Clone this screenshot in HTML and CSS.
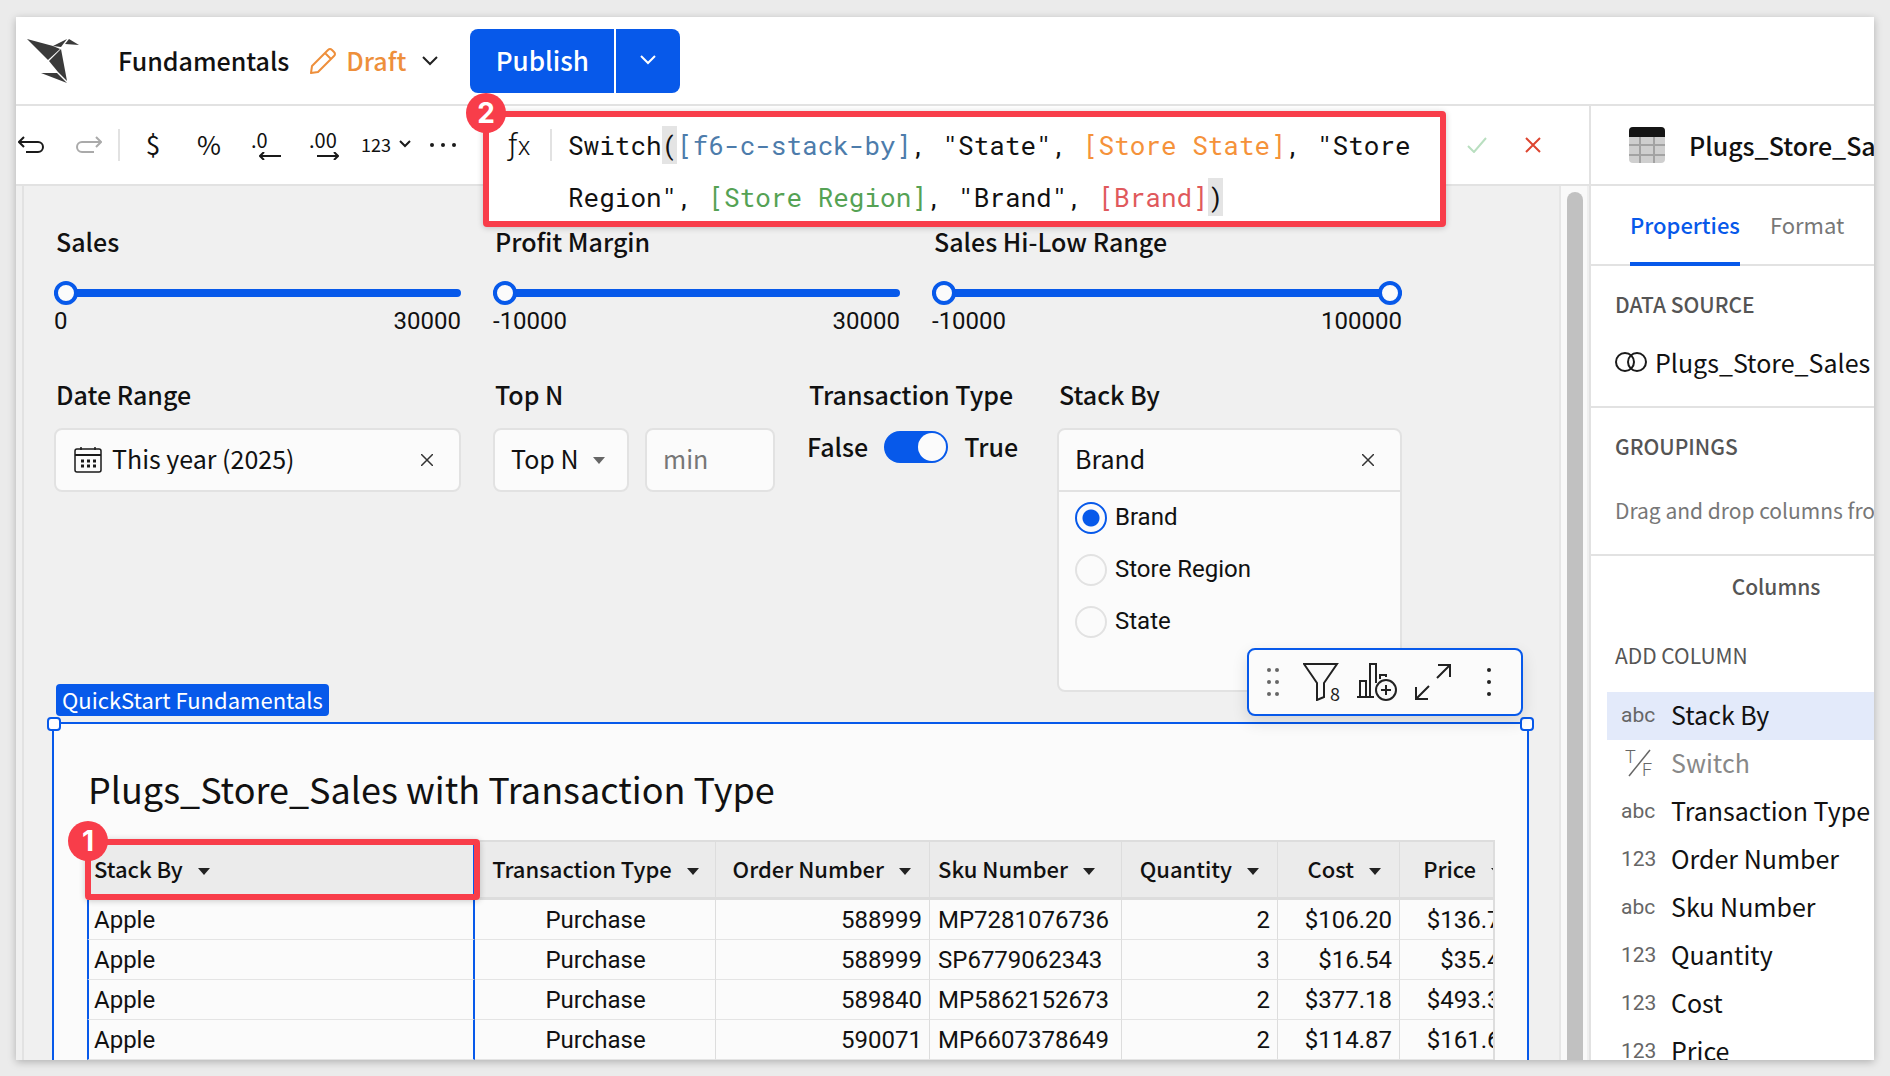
FILE: index.html
```html
<!DOCTYPE html>
<html lang="en">
<head>
<meta charset="utf-8">
<title>Fundamentals</title>
<link rel="stylesheet" href="styles.css">
</head>
<body>
<div class="window">
  <header class="topbar">
    <svg class="logo" width="52" height="46" viewBox="0 0 52 46" fill="#3a3a3a">
      <path d="M0 1 26 8 33 11 21 22Z"/><path d="M34 11 22 23 31 34 40 43Z"/><path d="M14 35H30L40 45Z"/><path d="M26 8 40 1 34 9Z"/><path d="M42 1 52 7 38 6Z"/>
    </svg>
    <h1 class="doc-name">Fundamentals</h1>
    <button class="draft" type="button">
      <svg width="28" height="28" viewBox="0 0 28 28" fill="none" stroke="#ee8f3b" stroke-width="2" stroke-linejoin="round"><path d="M2 26 3 19 19 3Q21 1 23 3L25 5Q27 7 25 9L9 25ZM16 6 22 12"/></svg>
      <span>Draft</span>
      <svg class="draft-chevron" width="16" height="10" viewBox="0 0 16 10" fill="none" stroke="#222" stroke-width="2"><path d="M1 1 8 8 15 1"/></svg>
    </button>
    <div class="publish">
      <button class="publish-main" type="button">Publish</button>
      <button class="publish-more" type="button" aria-label="Publish options">
        <svg width="18" height="10" viewBox="0 0 18 10" fill="none" stroke="#fff" stroke-width="2"><path d="M2 1 9 8 16 1"/></svg>
      </button>
    </div>
  </header>

  <div class="body">
    <div class="work">
      <div class="toolbar">
        <div class="tools">
          <button class="tool tool-undo" type="button" aria-label="Undo"><svg width="28" height="18" viewBox="0 0 28 18" fill="none" stroke="#1a1a1a" stroke-width="2"><path d="M6 1 1 6 6 11M1 6H20A5 5 0 0 1 20 16H8"/></svg></button>
          <button class="tool tool-redo" type="button" aria-label="Redo"><svg width="28" height="18" viewBox="0 0 28 18" fill="none" stroke="#aaa" stroke-width="2"><path d="M22 1 27 6 22 11M27 6H8A5 5 0 0 0 8 16H20"/></svg></button>
          <span class="divider"></span>
          <button class="tool tool-sign tool-first" type="button">$</button>
          <button class="tool tool-sign" type="button">%</button>
          <button class="tool tool-dec" type="button"><span>.0</span><svg width="22" height="8" viewBox="0 0 22 8" fill="none" stroke="#1a1a1a" stroke-width="2"><path d="M5 0 1 4 5 8M1 4H22"/></svg></button>
          <button class="tool tool-dec" type="button"><span>.00</span><svg width="22" height="8" viewBox="0 0 22 8" fill="none" stroke="#1a1a1a" stroke-width="2"><path d="M17 0 21 4 17 8M21 4H0"/></svg></button>
          <button class="tool tool-num" type="button">123<svg width="12" height="8" viewBox="0 0 12 8" fill="none" stroke="#1a1a1a" stroke-width="2"><path d="M1 1 6 6 11 1"/></svg></button>
          <button class="tool tool-more" type="button" aria-label="More"><svg width="26" height="4" viewBox="0 0 26 4" fill="#1a1a1a"><circle cx="2" cy="2" r="2"/><circle cx="13" cy="2" r="2"/><circle cx="24" cy="2" r="2"/></svg></button>
        </div>
        <div class="formula">
          <span class="badge">2</span>
          <span class="fx">ƒ<small>x</small></span>
          <span class="divider"></span>
          <div class="code" role="textbox" aria-label="Formula" contenteditable="true" spellcheck="false">Switch<mark>(</mark><span class="t-blue">[f6-c-stack-by]</span>, "State", <span class="t-orange">[Store State]</span>, "Store Region", <span class="t-green">[Store Region]</span>, "Brand", <span class="t-red">[Brand]</span><mark>)</mark></div>
        </div>
        <div class="confirm">
          <button type="button" aria-label="Apply"><svg width="20" height="16" viewBox="0 0 20 16" fill="none" stroke="#b9dfc0" stroke-width="2"><path d="M1 9 7 15 19 1"/></svg></button>
          <button type="button" aria-label="Cancel"><svg width="16" height="16" viewBox="0 0 16 16" fill="none" stroke="#dd4530" stroke-width="2"><path d="M1 1 15 15M15 1 1 15"/></svg></button>
        </div>
      </div>

      <div class="stage">
        <main class="canvas">
          <div class="controls sliders">
            <div class="control">
              <label for="sales">Sales</label>
              <input class="range" id="sales" type="range" min="0" max="30000" value="0">
              <div class="bounds"><span>0</span><span>30000</span></div>
            </div>
            <div class="control">
              <label for="margin">Profit Margin</label>
              <input class="range" id="margin" type="range" min="-10000" max="30000" value="-10000">
              <div class="bounds"><span>-10000</span><span>30000</span></div>
            </div>
            <div class="control">
              <label for="low">Sales Hi-Low Range</label>
              <div class="dual">
                <input class="range" id="low" type="range" min="-10000" max="100000" value="-10000">
                <input class="range range-over" type="range" min="-10000" max="100000" value="100000" aria-label="Sales high">
              </div>
              <div class="bounds"><span>-10000</span><span>100000</span></div>
            </div>
          </div>

          <div class="controls filters">
            <div class="control">
              <label for="date">Date Range</label>
              <div class="box box-row">
                <svg class="calendar" width="28" height="26" viewBox="0 0 28 26" fill="none" stroke="#1a1a1a" stroke-width="1.5"><rect x="1" y="2" width="26" height="23" rx="2"/><path d="M7 0V3M21 0V3"/><path d="M1 8H27" stroke-width="2"/><path d="M7 14H22M7 19H22" stroke-width="3" stroke-dasharray="3 3"/></svg>
                <input id="date" value="This year (2025)" readonly>
                <button class="clear" type="button" aria-label="Clear"><svg width="12" height="12" viewBox="0 0 12 12" fill="none" stroke="#333" stroke-width="1.5"><path d="M0 0 12 12M12 0 0 12"/></svg></button>
              </div>
            </div>
            <div class="control">
              <label for="topn">Top N</label>
              <div class="pair">
                <div class="box pick">
                  <select id="topn"><option>Top N</option></select>
                  <svg class="pick-caret" width="12" height="7" viewBox="0 0 12 7" fill="#666"><path d="M0 0H12L6 7Z"/></svg>
                </div>
                <input class="box min" placeholder="min" aria-label="Minimum">
              </div>
            </div>
            <div class="control">
              <label for="type">Transaction Type</label>
              <div class="toggle-row"><span>False</span><input class="toggle" id="type" type="checkbox" checked><span>True</span></div>
            </div>
            <div class="control">
              <label for="stack">Stack By</label>
              <div class="box stack">
                <div class="stack-head">
                  <input id="stack" value="Brand">
                  <button class="clear" type="button" aria-label="Clear"><svg width="12" height="12" viewBox="0 0 12 12" fill="none" stroke="#333" stroke-width="1.5"><path d="M0 0 12 12M12 0 0 12"/></svg></button>
                </div>
                <label class="option"><input type="radio" name="by" checked><span>Brand</span></label>
                <label class="option"><input type="radio" name="by"><span>Store Region</span></label>
                <label class="option"><input type="radio" name="by"><span>State</span></label>
              </div>
            </div>
          </div>

          <section class="element">
            <span class="tag">QuickStart Fundamentals</span>
            <span class="handle handle-left"></span>
            <span class="handle handle-right"></span>
            <div class="float">
              <svg width="12" height="28" viewBox="0 0 12 28" fill="#666"><circle cx="2" cy="2" r="2"/><circle cx="10" cy="2" r="2"/><circle cx="2" cy="14" r="2"/><circle cx="10" cy="14" r="2"/><circle cx="2" cy="26" r="2"/><circle cx="10" cy="26" r="2"/></svg>
              <button class="f-filter" type="button" aria-label="Filters, 8"><svg width="38" height="38" viewBox="0 0 38 38" fill="none" stroke="#222" stroke-width="2"><path d="M1 1H34L21 20V34L14 37V20Z"/><text x="27" y="38" class="f-count">8</text></svg></button>
              <button class="f-chart" type="button" aria-label="Add child element"><svg width="40" height="38" viewBox="0 0 40 38" fill="none" stroke="#222" stroke-width="2"><path d="M0 34H17M3 34V18H9V34M13 34V1H19V20M23 16V12H29V14"/><circle cx="29" cy="27" r="10"/><path d="M24 27H34M29 22V32"/></svg></button>
              <button class="f-expand" type="button" aria-label="Maximize"><svg width="36" height="36" viewBox="0 0 36 36" fill="none" stroke="#222" stroke-width="2"><path d="M23 1H35V13M35 1 22 14M1 23V35H13M1 35 14 22"/></svg></button>
              <button class="f-menu" type="button" aria-label="Menu"><svg width="4" height="28" viewBox="0 0 4 28" fill="#222"><circle cx="2" cy="2" r="2"/><circle cx="2" cy="14" r="2"/><circle cx="2" cy="26" r="2"/></svg></button>
            </div>
            <h2>Plugs_Store_Sales with Transaction Type</h2>
            <div class="table-area">
              <div class="callout"><span class="badge">1</span></div>
              <div class="table-clip">
                <table>
                  <colgroup><col class="c-stack"><col class="c-type"><col class="c-order"><col class="c-sku"><col class="c-qty"><col class="c-money"><col class="c-money"></colgroup>
                  <thead><tr><th class="sel">Stack By<i></i></th><th class="mid">Transaction Type<i></i></th><th class="num">Order Number<i></i></th><th>Sku Number<i></i></th><th class="num">Quantity<i></i></th><th class="num">Cost<i></i></th><th class="num">Price<i></i></th></tr></thead>
                  <tbody>
                    <tr><td class="sel">Apple</td><td class="mid">Purchase</td><td class="num">588999</td><td>MP7281076736</td><td class="num">2</td><td class="num">$106.20</td><td class="num">$136.75</td></tr>
                    <tr><td class="sel">Apple</td><td class="mid">Purchase</td><td class="num">588999</td><td>SP6779062343</td><td class="num">3</td><td class="num">$16.54</td><td class="num">$35.40</td></tr>
                    <tr><td class="sel">Apple</td><td class="mid">Purchase</td><td class="num">589840</td><td>MP5862152673</td><td class="num">2</td><td class="num">$377.18</td><td class="num">$493.30</td></tr>
                    <tr><td class="sel">Apple</td><td class="mid">Purchase</td><td class="num">590071</td><td>MP6607378649</td><td class="num">2</td><td class="num">$114.87</td><td class="num">$161.60</td></tr>
                  </tbody>
                </table>
              </div>
            </div>
          </section>
        </main>
        <div class="scrollbar"><div class="thumb"></div></div>
      </div>
    </div>

    <aside class="sidebar">
      <div class="panel">
        <div class="panel-head">
          <svg width="36" height="36" viewBox="0 0 36 36"><rect width="36" height="36" rx="4" fill="#cfcfcf"/><path d="M11 10V36M25 10V36M0 18H36M0 28H36" stroke="#a3a3a3" stroke-width="2"/><path d="M0 10V4A4 4 0 0 1 4 0H32A4 4 0 0 1 36 4V10Z" fill="#151515"/></svg>
          <span>Plugs_Store_Sales with</span>
        </div>
        <nav class="tabs"><a class="tab tab-on" href="#properties">Properties</a><a class="tab" href="#format">Format</a></nav>
        <section class="block">
          <h3>DATA SOURCE</h3>
          <p class="source"><svg width="32" height="20" viewBox="0 0 32 20" fill="none" stroke="#1a1a1a" stroke-width="2"><circle cx="10" cy="10" r="9"/><circle cx="22" cy="10" r="9"/></svg>Plugs_Store_Sales</p>
        </section>
        <section class="block">
          <h3>GROUPINGS</h3>
          <p class="hint">Drag and drop columns from</p>
        </section>
        <section class="columns">
          <h3>Columns</h3>
          <button class="add" type="button">ADD COLUMN</button>
          <ul>
            <li class="on"><span class="kind">abc</span>Stack By</li>
            <li class="off"><span class="kind"><svg width="28" height="28" viewBox="0 0 28 28"><text x="0" y="14" class="tf">T</text><text x="17" y="27" class="tf">F</text><path d="M4 27 25 1" stroke="#666" stroke-width="1.5"/></svg></span>Switch</li>
            <li><span class="kind">abc</span>Transaction Type</li>
            <li><span class="kind">123</span>Order Number</li>
            <li><span class="kind">abc</span>Sku Number</li>
            <li><span class="kind">123</span>Quantity</li>
            <li><span class="kind">123</span>Cost</li>
            <li><span class="kind">123</span>Price</li>
          </ul>
        </section>
      </div>
    </aside>
  </div>
</div>
</body>
</html>
```
FILE: styles.css
```css
:root {
  --ui: "Source Sans Pro", "Noto Sans CJK SC", sans-serif;
  --data: Roboto, "Liberation Sans", sans-serif;
  --blue: #0759ea;
  --line: #e2e2e2;
  --red: #f83d4a;
  --ink: #111;
}
* { box-sizing: border-box; }
body {
  margin: 0;
  height: 100vh;
  padding: 17px 16px 16px;
  overflow: hidden;
  background: #ebebeb;
  color: var(--ink);
  font-family: var(--ui);
  font-size: 25px;
  line-height: 32px;
}
h1, h2, h3, p, ul { margin: 0; padding: 0; font-weight: 400; }
ul { list-style: none; }
button, input, select {
  margin: 0; padding: 0; border: 0; background: none;
  color: inherit; font: inherit;
}
svg { display: block; flex: none; }
button { display: flex; align-items: center; justify-content: center; }

.window {
  height: 100%;
  display: flex;
  flex-direction: column;
  overflow: hidden;
  background: #fff;
  box-shadow: 0 2px 8px rgba(0, 0, 0, .25);
}
.topbar {
  display: flex;
  align-items: center;
  flex: none;
  height: 89px;
  padding: 0 12px 0 11px;
  border-bottom: 2px solid var(--line);
}
.logo { margin-right: 39px; }
.doc-name { padding-bottom: 2px; font-size: 25px; font-weight: 500; margin-right: 20px; }
.draft { gap: 9px; color: #ee8f3b; font-weight: 500; }
.draft span { padding-bottom: 2px; }
.draft-chevron { margin-left: 7px; }
.publish { display: flex; gap: 2px; margin-left: 32px; color: #fff; font-size: 26px; font-weight: 500; }
.publish button { height: 64px; padding-bottom: 2px; background: var(--blue); }
.publish-main { width: 144px; border-radius: 8px 0 0 8px; }
.publish-more { width: 64px; border-radius: 0 8px 8px 0; }

.body { flex: 1; min-height: 0; display: flex; }
.work { flex: 1; min-width: 0; display: flex; flex-direction: column; }
.toolbar {
  position: relative;
  z-index: 2;
  flex: none;
  display: flex;
  height: 80px;
  border-bottom: 2px solid var(--line);
}
.tools { display: flex; align-items: center; width: 467px; height: 78px; padding-left: 2px; flex: none; }
.tool { height: 40px; flex: none; }
.tool-undo { width: 28px; }
.tool-redo { width: 28px; margin: 0 16px 0 28px; }
.divider { flex: none; width: 2px; height: 32px; background: var(--line); }
.tool-sign { width: 56px; padding-bottom: 2px; font-size: 26px; }
.tool-first { margin-left: 5px; }
.tool-dec { width: 30px; margin: 0 14px; flex-direction: column; font-size: 20px; line-height: 20px; }
.tool-dec span { align-self: flex-start; }
.tool-dec svg { align-self: flex-end; margin-top: 2px; }
.tool-num { width: 52px; margin-left: 7px; padding-bottom: 2px; gap: 8px; font-size: 18px; }
.tool-more { width: 62px; }

.formula {
  position: relative;
  flex: 1;
  align-self: flex-start;
  display: flex;
  align-items: flex-start;
  height: 116px;
  margin-top: 5px;
  padding: 2px 8px 0 19px;
  border: 6px solid var(--red);
  border-radius: 4px;
  background: #fff;
  box-shadow: 0 1px 6px rgba(0, 0, 0, .2);
}
.formula .divider { margin: 10px 16px 0 18px; }
.fx { width: 24px; margin-top: 10px; font-family: var(--data); font-size: 30px; font-weight: 300; white-space: nowrap; }
.fx small { font-size: 26px; }
.code {
  flex: 1;
  outline: 0;
  font-family: "Roboto Mono", "Liberation Mono", monospace;
  font-size: 26px;
  line-height: 52px;
}
.code mark { padding: 2px 0; background: #e4e4e4; color: inherit; }
.t-blue { color: #4d7cab; }
.t-orange { color: #f5923a; }
.t-green { color: #55a254; }
.t-red { color: #e0595c; }
.badge {
  position: absolute;
  left: -23px;
  top: -24px;
  width: 40px;
  height: 40px;
  border-radius: 50%;
  background: var(--red);
  color: #fff;
  font: 700 28px/40px Inter, sans-serif;
  text-align: center;
}
.confirm { display: flex; align-items: center; gap: 38px; height: 78px; padding: 0 48px 0 21px; }

.stage { flex: 1; min-height: 0; display: flex; overflow: hidden; background: #f0f0f0; }
.canvas {
  flex: 1;
  min-width: 0;
  margin-left: 6px;
  padding: 39px 30px 0 28px;
  border-left: 2px solid var(--line);
}
.scrollbar {
  flex: none;
  width: 30px;
  padding: 6px 4px 0 6px;
  border-left: 2px solid #e6e6e6;
  border-right: 2px solid #efefef;
  background: #f9f9f9;
}
.thumb { width: 16px; height: 100%; border-radius: 8px 8px 0 0; background: #c1c1c1; }

.controls { display: grid; column-gap: 32px; padding: 0 127px 0 2px; }
.sliders { grid-template-columns: 407fr 407fr 470fr; margin-bottom: 43px; }
.filters { grid-template-columns: 407fr 282fr 218fr 345fr; margin-bottom: 30px; }
.control { min-width: 0; }
.control > label { display: block; padding-left: 2px; margin-bottom: 18px; font-weight: 500; white-space: nowrap; }
.sliders .control > label { margin-bottom: 24px; }
.range {
  display: block;
  width: 100%;
  height: 24px;
  appearance: none;
  -webkit-appearance: none;
}
.range::-webkit-slider-runnable-track { height: 8px; border-radius: 4px; background: var(--blue); }
.range::-webkit-slider-thumb {
  -webkit-appearance: none;
  width: 24px;
  height: 24px;
  margin-top: -8px;
  border: 4px solid var(--blue);
  border-radius: 50%;
  background: #fbfbfb;
}
.dual { display: grid; }
.dual .range { grid-area: 1 / 1; }
.range-over::-webkit-slider-runnable-track { background: none; }
.bounds { display: flex; justify-content: space-between; margin-top: 2px; font: 24px/28px var(--data); }

.box { border: 2px solid var(--line); border-radius: 8px; background: #fbfbfb; }
.box-row, .stack-head { display: flex; align-items: center; height: 64px; padding: 0 26px 0 18px; }
.box input { flex: 1; min-width: 0; padding-bottom: 4px; }
.calendar { margin-right: 10px; }
.pair { display: grid; grid-template-columns: 136fr 130fr; gap: 16px; }
.pick { position: relative; height: 64px; }
.pick select { appearance: none; width: 100%; height: 60px; padding: 0 0 4px 16px; }
.pick-caret { position: absolute; right: 22px; top: 27px; pointer-events: none; }
.min { min-width: 0; height: 64px; padding: 0 0 4px 16px; }
.min::placeholder { color: #777; }
.toggle-row { display: flex; align-items: center; gap: 16px; height: 38px; font-weight: 500; }
.toggle-row span { padding-bottom: 2px; }
.toggle {
  appearance: none;
  width: 64px;
  height: 32px;
  padding: 2px;
  border-radius: 16px;
  background: var(--blue);
}
.toggle::before { content: ""; display: block; width: 28px; height: 28px; margin-left: auto; border-radius: 50%; background: #fbfbfb; }
.stack { height: 264px; }
.stack-head { height: 62px; padding-left: 16px; border-bottom: 2px solid var(--line); }
.option { display: flex; align-items: center; gap: 8px; height: 52px; padding-left: 16px; font: 24px/28px var(--data); }
.option span { padding-bottom: 2px; }
.option input {
  flex: none;
  appearance: none;
  width: 32px;
  height: 32px;
  padding: 0;
  border: 2px solid var(--line);
  border-radius: 50%;
}
.option input:checked { border-color: var(--blue); background: radial-gradient(circle, var(--blue) 8px, transparent 9px); }

.element {
  position: relative;
  min-height: 500px;
  padding: 40px 32px 0 33px;
  border: 2px solid var(--blue);
  background: #fbfbfb;
}
.element h2 { padding-left: 1px; margin-bottom: 28px; font-size: 36px; line-height: 48px; }
.tag {
  position: absolute;
  left: 2px;
  top: -40px;
  height: 32px;
  padding: 0 6px;
  border-radius: 4px;
  background: var(--blue);
  color: #fff;
  font-size: 22px;
  line-height: 30px;
}
.handle { position: absolute; top: -7px; width: 14px; height: 14px; border: 2px solid var(--blue); border-radius: 4px; background: #fff; }
.handle-left { left: -7px; }
.handle-right { right: -7px; }
.float {
  position: absolute;
  right: 4px;
  top: -76px;
  display: flex;
  align-items: center;
  width: 276px;
  height: 68px;
  padding: 0 0 0 18px;
  border: 2px solid var(--blue);
  border-radius: 8px;
  background: #fbfbfb;
  box-shadow: 0 6px 16px rgba(0, 0, 0, .12);
}
.f-filter { margin-left: 24px; }
.f-chart { margin-left: 16px; }
.f-expand { margin-left: 18px; }
.f-menu { margin-left: 36px; }
.f-count { fill: #222; stroke: none; font: 18px var(--ui); }
.table-area { position: relative; }
.callout {
  position: absolute;
  left: -2px;
  top: -1px;
  width: 395px;
  height: 61px;
  border: 6px solid var(--red);
  border-radius: 4px;
  box-shadow: 0 1px 6px rgba(0, 0, 0, .2);
}
.table-clip { overflow: hidden; border-right: 2px solid #ddd; }
table { width: 1435px; table-layout: fixed; border-collapse: separate; border-spacing: 0; font: 24px/28px var(--data); }
.c-stack { width: 388px; }
.c-type { width: 241px; }
.c-order { width: 214px; }
.c-sku { width: 192px; }
.c-qty { width: 156px; }
.c-money { width: 122px; }
th, td { padding: 0 7px 0 8px; border-right: 1px solid #ddd; text-align: left; white-space: nowrap; }
td { height: 40px; border-bottom: 1px solid #e4e4e4; }
th {
  height: 60px;
  padding-bottom: 3px;
  border-top: 2px solid #ddd;
  border-bottom: 3px solid #ddd;
  background: #ebebeb;
  font: 500 22px/28px var(--ui);
}
th i { display: inline-block; margin-left: 15px; border: 6px solid transparent; border-top: 7px solid #222; border-bottom: 0; vertical-align: 3px; }
.mid { text-align: center; }
.num { text-align: right; }
th.num { padding-right: 18px; }
.sel { padding-left: 5px; border-left: 2px solid var(--blue); border-right: 2px solid var(--blue); }

.sidebar { flex: none; width: 285px; overflow: hidden; border-left: 2px solid var(--line); }
.panel { width: 370px; font-size: 21px; line-height: 28px; }
.panel-head { display: flex; align-items: center; gap: 24px; height: 80px; padding: 0 38px; border-bottom: 2px solid var(--line); font-size: 25px; font-weight: 500; white-space: nowrap; }
.tabs { display: flex; gap: 30px; height: 80px; padding-left: 39px; border-bottom: 2px solid var(--line); font-size: 22px; }
.tab { height: 80px; color: #777; line-height: 76px; text-decoration: none; }
.tab-on { border-bottom: 4px solid var(--blue); border-radius: 3px 3px 0 0; color: var(--blue); font-weight: 500; }
h3 { color: #555; font-size: 21px; font-weight: 500; }
.block { padding: 24px 24px 27px; border-bottom: 2px solid var(--line); }
.source { display: flex; align-items: center; gap: 8px; margin: 28px 0 1px; font-size: 25px; line-height: 32px; }
.hint { margin: 36px 0 3px; color: #777; white-space: nowrap; }
.columns { padding-top: 16px; }
.columns h3 { text-align: center; }
.add { margin: 41px 0 23px 24px; color: #555; }
li { display: flex; align-items: center; height: 48px; margin-left: 16px; padding: 0 0 4px 14px; font-size: 25px; }
.on { background: #e3eafa; }
.off { color: #888; }
.kind { width: 50px; padding-top: 2px; color: #666; font: 21px/28px var(--data); }
.kind svg { margin-left: 4px; }
.tf { fill: #666; font: 300 18px var(--data); }
```
